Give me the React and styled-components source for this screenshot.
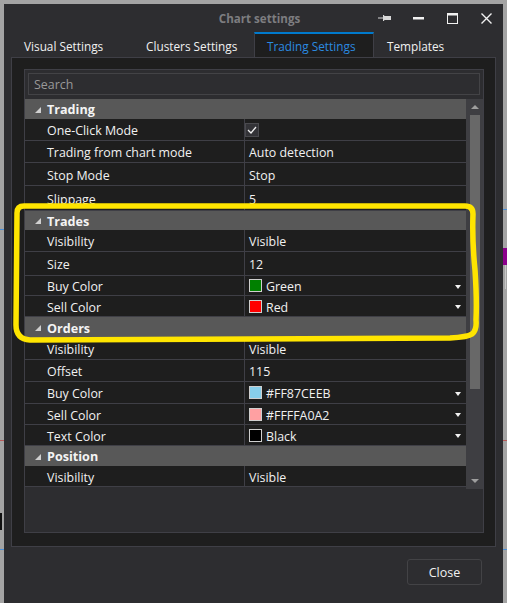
import styled, { createGlobalStyle } from "styled-components";

const GlobalStyle = createGlobalStyle`
  html, body {
    margin: 0;
    padding: 0;
    background: #a4a4a4;
  }
  * { box-sizing: border-box; }
`;

const Page = styled.div`
  position: relative;
  width: 507px;
  height: 603px;
  padding: 4px 4px 0 4px;
  overflow: hidden;
  font-family: "Open Sans", "Noto Sans", sans-serif;
  font-size: 12.4px;
  color: #f1f1f1;
`;

// bits of the chart peeking out from behind the dialog
const ChartMark = styled.div`
  position: absolute;
  left: ${(p) => p.x}px;
  top: ${(p) => p.y}px;
  width: ${(p) => p.w}px;
  height: ${(p) => p.h}px;
  background: ${(p) => p.c};
`;

const Window = styled.div`
  position: relative;
  height: 599px;
  background: #2d2d30;
  display: flex;
  flex-direction: column;
`;

const TitleBar = styled.div`
  position: relative;
  height: 28px;
  display: flex;
  align-items: center;
  justify-content: center;
`;

const Title = styled.div`
  font-weight: 700;
  font-size: 11.6px;
  color: #7d7d80;
  margin-left: 12px;
`;

const Controls = styled.div`
  position: absolute;
  right: 0;
  top: 0;
  height: 28px;
  display: flex;
  align-items: center;
`;

const ControlButton = styled.div`
  width: 34px;
  height: 28px;
  display: flex;
  align-items: center;
  justify-content: center;
`;

const TabRow = styled.div`
  height: 25px;
  display: flex;
  align-items: stretch;
  padding-left: 7px;
`;

const Tab = styled.div`
  display: flex;
  align-items: center;
  padding: 1px 12px 0 12px;
  width: ${(p) => p.w}px;
  font-size: 11.8px;
  color: ${(p) => (p.active ? "#2b8ae0" : "#f1f1f1")};
  background: ${(p) => (p.active ? "#1e1e1e" : "transparent")};
  border-top: 2px solid ${(p) => (p.active ? "#007acc" : "transparent")};
  border-left: 1px solid ${(p) => (p.active ? "#3f3f46" : "transparent")};
  border-right: 1px solid ${(p) => (p.active ? "#3f3f46" : "transparent")};
`;

const Panel = styled.div`
  height: 490px;
  margin: 0 7px;
  background: #1e1e1e;
  border: 1px solid #3f3f46;
  padding: 11px 11px 13px 12px;
`;

const Grid = styled.div`
  height: 100%;
  background: #2d2d30;
  border: 1px solid #3f3f46;
  display: flex;
  flex-direction: column;
`;

const Search = styled.div`
  height: 22px;
  margin: 3px 3px 4px 3px;
  background: #2d2d30;
  border: 1px solid #434346;
  color: #999999;
  padding-left: 5px;
  display: flex;
  align-items: center;
`;

const Body = styled.div`
  display: flex;
  height: 390px;
`;

const Rows = styled.div`
  flex: 1;
  display: flex;
  flex-direction: column;
`;

const Category = styled.div`
  height: ${(p) => p.h || 20}px;
  flex: none;
  background: #585858;
  display: flex;
  align-items: center;
  font-weight: 700;
  color: #f4f4f4;
  font-size: 12.6px;
  padding-top: 1px;
`;

const Expander = styled.div`
  width: 22px;
  display: flex;
  justify-content: flex-end;
  padding-right: 6px;
`;

const Row = styled.div`
  height: ${(p) => p.h || 22}px;
  flex: none;
  display: grid;
  grid-template-columns: 220px 1fr;
  background: #1e1e1e;
  border-bottom: 1px solid #3f3f46;
`;

const NameCell = styled.div`
  padding: 2px 0 0 22px;
  display: flex;
  align-items: center;
  border-right: 1px solid #3f3f46;
`;

const ValueCell = styled.div`
  position: relative;
  padding: 2px 0 0 4px;
  display: flex;
  align-items: center;
`;

const CheckBox = styled.div`
  width: 14px;
  height: 14px;
  margin: -2px 0 0 -4px;
  background: #333337;
  border: 1px solid #4a4a4e;
  display: flex;
  align-items: center;
  justify-content: center;
`;

const Swatch = styled.div`
  width: 13px;
  height: 13px;
  margin: -2px 4px 0 0;
  background: ${(p) => p.c};
  border: 1px solid #cfcfcf;
`;

const DropArrow = styled.div`
  position: absolute;
  right: 5px;
  top: 50%;
  margin-top: -1px;
  width: 0;
  height: 0;
  border-left: 3.5px solid transparent;
  border-right: 3.5px solid transparent;
  border-top: 4px solid #f1f1f1;
`;

const ScrollBar = styled.div`
  width: 17px;
  background: #3e3e42;
  display: flex;
  flex-direction: column;
  align-items: center;
`;

const ScrollArrow = styled.div`
  height: 16px;
  display: flex;
  align-items: center;
  justify-content: center;
`;

const Thumb = styled.div`
  width: 10px;
  height: 274px;
  background: #686868;
`;

const Footer = styled.div`
  flex: 1;
  display: flex;
  justify-content: flex-end;
  align-items: flex-start;
  padding: 12px 21px 0 0;
`;

const Button = styled.div`
  width: 75px;
  height: 26px;
  border: 1px solid #434346;
  border-radius: 3px;
  background: #2d2d30;
  display: flex;
  align-items: center;
  justify-content: center;
  font-size: 12.5px;
`;

const Annotation = styled.svg`
  position: absolute;
  left: 0;
  top: 0;
  pointer-events: none;
`;

const Tri = () => (
  <svg width="6" height="6" viewBox="0 0 6 6">
    <polygon points="6,0 6,6 0,6" fill="#d0d0d0" />
  </svg>
);

const sections = [
  {
    title: "Trading",
    rows: [
      { name: "One-Click Mode", check: true },
      { name: "Trading from chart mode", value: "Auto detection" },
      { name: "Stop Mode", value: "Stop", h: 23 },
      { name: "Slippage", value: "5", h: 25 },
    ],
  },
  {
    title: "Trades",
    h: 19,
    rows: [
      { name: "Visibility", value: "Visible" },
      { name: "Size", value: "12", h: 24 },
      { name: "Buy Color", value: "Green", color: "#008000", h: 20 },
      { name: "Sell Color", value: "Red", color: "#ff0000", h: 21 },
    ],
  },
  {
    title: "Orders",
    h: 21,
    rows: [
      { name: "Visibility", value: "Visible" },
      { name: "Offset", value: "115" },
      { name: "Buy Color", value: "#FF87CEEB", color: "#87ceeb" },
      { name: "Sell Color", value: "#FFFFA0A2", color: "#ffa0a2", h: 21 },
      { name: "Text Color", value: "Black", color: "#000000", h: 21 },
    ],
  },
  {
    title: "Position",
    rows: [{ name: "Visibility", value: "Visible", h: 21 }],
  },
];

export default function App() {
  return (
    <>
      <GlobalStyle />
      <Page>
        <ChartMark x={0} y={229} w={4} h={1} c="#4a8fd8" />
        <ChartMark x={0} y={440} w={4} h={1} c="#b85a5a" />
        <ChartMark x={0} y={513} w={2} h={17} c="#111" />
        <ChartMark x={0} y={549} w={4} h={1} c="#4a8fd8" />
        <ChartMark x={503} y={209} w={4} h={1} c="#4a8fd8" />
        <ChartMark x={503} y={248} w={4} h={17} c="#8b008b" />
        <ChartMark x={505} y={265} w={1} h={24} c="#c8c8c8" />
        <ChartMark x={503} y={440} w={4} h={1} c="#b85a5a" />
        <ChartMark x={503} y={549} w={4} h={1} c="#4a8fd8" />

        <Window>
          <TitleBar>
            <Title>Chart settings</Title>
            <Controls>
              <ControlButton>
                <svg width="13" height="8" viewBox="0 0 13 8">
                  <rect x="0" y="3.5" width="5" height="1" fill="#d8d8d8" />
                  <rect x="5" y="1" width="1.2" height="6" fill="#d8d8d8" />
                  <rect x="6" y="2" width="7" height="4" fill="#d8d8d8" />
                </svg>
              </ControlButton>
              <ControlButton>
                <svg width="11" height="3" viewBox="0 0 11 3">
                  <rect x="0" y="0" width="11" height="2.5" fill="#f1f1f1" />
                </svg>
              </ControlButton>
              <ControlButton>
                <svg width="11" height="11" viewBox="0 0 11 11">
                  <rect x="0.5" y="0.5" width="10" height="10" fill="none" stroke="#f1f1f1" />
                  <rect x="0.5" y="0.5" width="10" height="2" fill="#f1f1f1" />
                </svg>
              </ControlButton>
              <ControlButton>
                <svg width="11" height="11" viewBox="0 0 11 11">
                  <path d="M0.5 0.5 L10.5 10.5 M10.5 0.5 L0.5 10.5" stroke="#f1f1f1" strokeWidth="1.4" />
                </svg>
              </ControlButton>
            </Controls>
          </TitleBar>

          <TabRow>
            <Tab w={122}>Visual Settings</Tab>
            <Tab w={121}>Clusters Settings</Tab>
            <Tab w={120} active>Trading Settings</Tab>
            <Tab w={110}>Templates</Tab>
          </TabRow>

          <Panel>
            <Grid>
              <Search>Search</Search>
              <Body>
                <Rows>
                  {sections.map((s) => (
                    <div key={s.title}>
                      <Category h={s.h}>
                        <Expander>
                          <Tri />
                        </Expander>
                        {s.title}
                      </Category>
                      {s.rows.map((r) => (
                        <Row key={s.title + r.name} h={r.h}>
                          <NameCell>{r.name}</NameCell>
                          <ValueCell>
                            {r.check && (
                              <CheckBox>
                                <svg width="10" height="8" viewBox="0 0 10 8">
                                  <path d="M1 4 L4 7 L9 1" fill="none" stroke="#f1f1f1" strokeWidth="1.3" />
                                </svg>
                              </CheckBox>
                            )}
                            {r.color && <Swatch c={r.color} />}
                            {r.value}
                            {r.color && <DropArrow />}
                          </ValueCell>
                        </Row>
                      ))}
                    </div>
                  ))}
                </Rows>
                <ScrollBar>
                  <ScrollArrow>
                    <svg width="8" height="4" viewBox="0 0 8 4">
                      <polygon points="0,4 8,4 4,0" fill="#9e9e9e" />
                    </svg>
                  </ScrollArrow>
                  <Thumb />
                  <div style={{ flex: 1 }} />
                  <ScrollArrow>
                    <svg width="8" height="4" viewBox="0 0 8 4">
                      <polygon points="0,0 8,0 4,4" fill="#9e9e9e" />
                    </svg>
                  </ScrollArrow>
                </ScrollBar>
              </Body>
            </Grid>
          </Panel>

          <Footer>
            <Button>Close</Button>
          </Footer>
        </Window>

        <Annotation width="507" height="603" viewBox="0 0 507 603">
          <path
            d="M24 206 Q17 206 17 213 L16 325 Q16 339 30 340 L450 338 Q468 337 472 334 Q477 330 476 320 Q477 300 475 270 Q472 240 473 214 Q473 206 465 206 L24 206 Z"
            fill="none"
            stroke="#ffe500"
            strokeWidth="5.5"
            strokeLinejoin="round"
          />
        </Annotation>
      </Page>
    </>
  );
}
